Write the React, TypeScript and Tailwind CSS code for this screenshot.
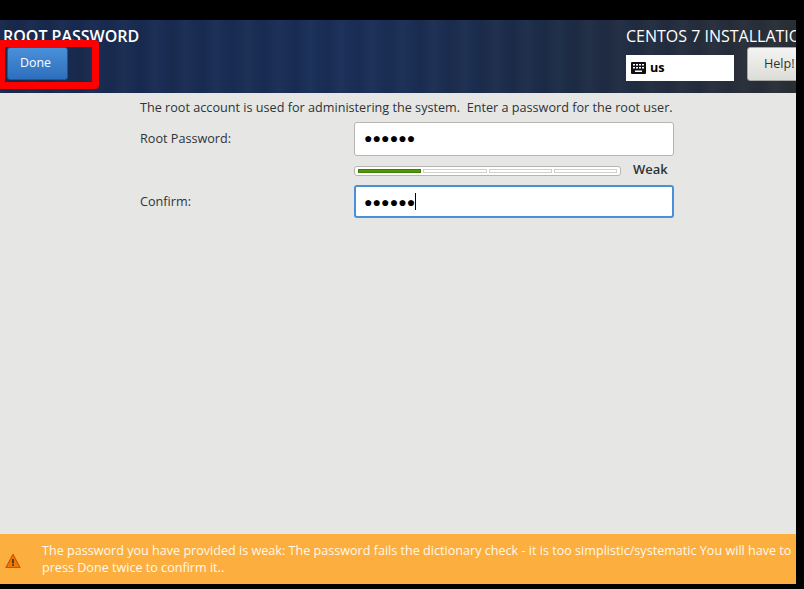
export default function App() {
  const font = "font-['Open_Sans','Noto_Sans',sans-serif]";
  return (
    <div className={`relative w-[804px] h-[589px] bg-black pt-[20px] pr-[8px] pb-[5px] overflow-hidden flex flex-col ${font}`}>
      <header className="h-[73px] shrink-0 flex justify-between overflow-hidden bg-[repeating-linear-gradient(90deg,rgba(255,255,255,0.02)_0px,rgba(255,255,255,0)_9px,rgba(0,0,0,0.05)_17px,rgba(255,255,255,0.02)_31px),linear-gradient(90deg,#18294d_0%,#1a2f58_45%,#1d2c47_70%,#2b2f36_100%)]">
        <div className="pl-[3px] pt-[7px]">
          <div className="text-[16px] leading-[18px] font-semibold text-white whitespace-nowrap">ROOT PASSWORD</div>
          <button className="mt-[2px] ml-[4px] w-[61px] h-[33px] rounded-[3px] border border-[#1f558f] bg-gradient-to-b from-[#4a90d9] to-[#2d6fbd] text-[12.4px] text-left pl-[12px] text-white">Done</button>
        </div>
        <div className="w-[170px] shrink-0 pt-[7px] overflow-hidden">
          <div className="text-[16px] leading-[18px] text-white whitespace-nowrap">CENTOS 7 INSTALLATION</div>
          <div className="flex items-end gap-[13px] mt-[2px] w-[200px]">
            <div className="w-[108px] h-[26px] bg-white flex items-center pl-[5px] gap-[4px]">
              <svg width="15" height="12" viewBox="0 0 15 12">
                <rect width="15" height="12" rx="1" fill="#111" />
                <g fill="#fff">
                  <rect x="2" y="2" width="2" height="1.5" /><rect x="5" y="2" width="2" height="1.5" /><rect x="8" y="2" width="2" height="1.5" /><rect x="11" y="2" width="2" height="1.5" />
                  <rect x="2" y="5" width="2" height="1.5" /><rect x="5" y="5" width="2" height="1.5" /><rect x="8" y="5" width="2" height="1.5" /><rect x="11" y="5" width="2" height="1.5" />
                  <rect x="4" y="8.5" width="7" height="1.5" />
                </g>
              </svg>
              <span className="text-[12.6px] font-bold text-black">us</span>
            </div>
            <button className="w-[60px] h-[34px] shrink-0 rounded-[3px] border border-[#a8a8a4] bg-gradient-to-b from-[#f4f4f2] to-[#dcdcd8] text-[12.6px] text-[#2e3436] text-left pl-[16px]">Help!</button>
          </div>
        </div>
      </header>

      <main className="flex-1 bg-[#e6e6e4] text-[#2e3436] text-[12.65px] pl-[140px]">
        <p className="mt-[6px] leading-[17px] whitespace-pre">The root account is used for administering the system.  Enter a password for the root user.</p>
        <div className="mt-[6px] flex items-center">
          <label className="w-[214px] pb-[2px]">Root Password:</label>
          <div className="w-[320px] h-[34px] bg-white border border-[#b5b5b1] rounded-[3px] flex items-center pl-[9px] pb-[3px] text-[14px] tracking-[0.1px] text-black">●●●●●●</div>
        </div>
        <div className="mt-[10px] ml-[214px] flex items-center h-[10px]">
          <div className="w-[267px] h-[10px] bg-white border border-[#b5b5b1] rounded-[3px] flex items-center gap-[2px] px-[3px]">
            <div className="flex-1 h-[4px] bg-[#4e9a06] border border-[#3f7d05]"></div>
            <div className="flex-1 h-[4px] bg-white border border-[#cfcfcb]"></div>
            <div className="flex-1 h-[4px] bg-white border border-[#cfcfcb]"></div>
            <div className="flex-1 h-[4px] bg-white border border-[#cfcfcb]"></div>
          </div>
          <span className="ml-[12px] pb-[2px] text-[13px] font-semibold">Weak</span>
        </div>
        <div className="mt-[9px] flex items-center">
          <label className="w-[214px]">Confirm:</label>
          <div className="w-[320px] h-[33px] bg-white border-2 border-[#4a90d9] rounded-[3px] flex items-center pl-[8px] text-[14px] tracking-[0.1px] text-black">
            ●●●●●●<span className="w-px h-[17px] bg-black"></span>
          </div>
        </div>
      </main>

      <footer className="h-[50px] shrink-0 bg-[#fcaf3e] flex items-center text-[12.6px] leading-[17px] text-[#fff8ec]">
        <div className="w-[42px] shrink-0 pl-[5px] pt-[4px]">
          <svg width="16" height="16" viewBox="0 0 16 16">
            <path d="M8 1.5 15 14.5H1Z" fill="#f57900" stroke="#c4560a" strokeWidth="1.2" strokeLinejoin="round" />
            <rect x="7.2" y="6" width="1.6" height="4.5" fill="#2e3436" />
            <rect x="7.2" y="11.3" width="1.6" height="1.6" fill="#2e3436" />
          </svg>
        </div>
        <p className="whitespace-nowrap">The password you have provided is weak: The password fails the dictionary check - it is too simplistic/systematic You will have to<br />press Done twice to confirm it..</p>
      </footer>

      <div className="absolute left-[-2px] top-[40px] w-[101px] h-[49px] border-[7px] border-[#ff0000] rounded-[4px] pointer-events-none"></div>
    </div>
  );
}
